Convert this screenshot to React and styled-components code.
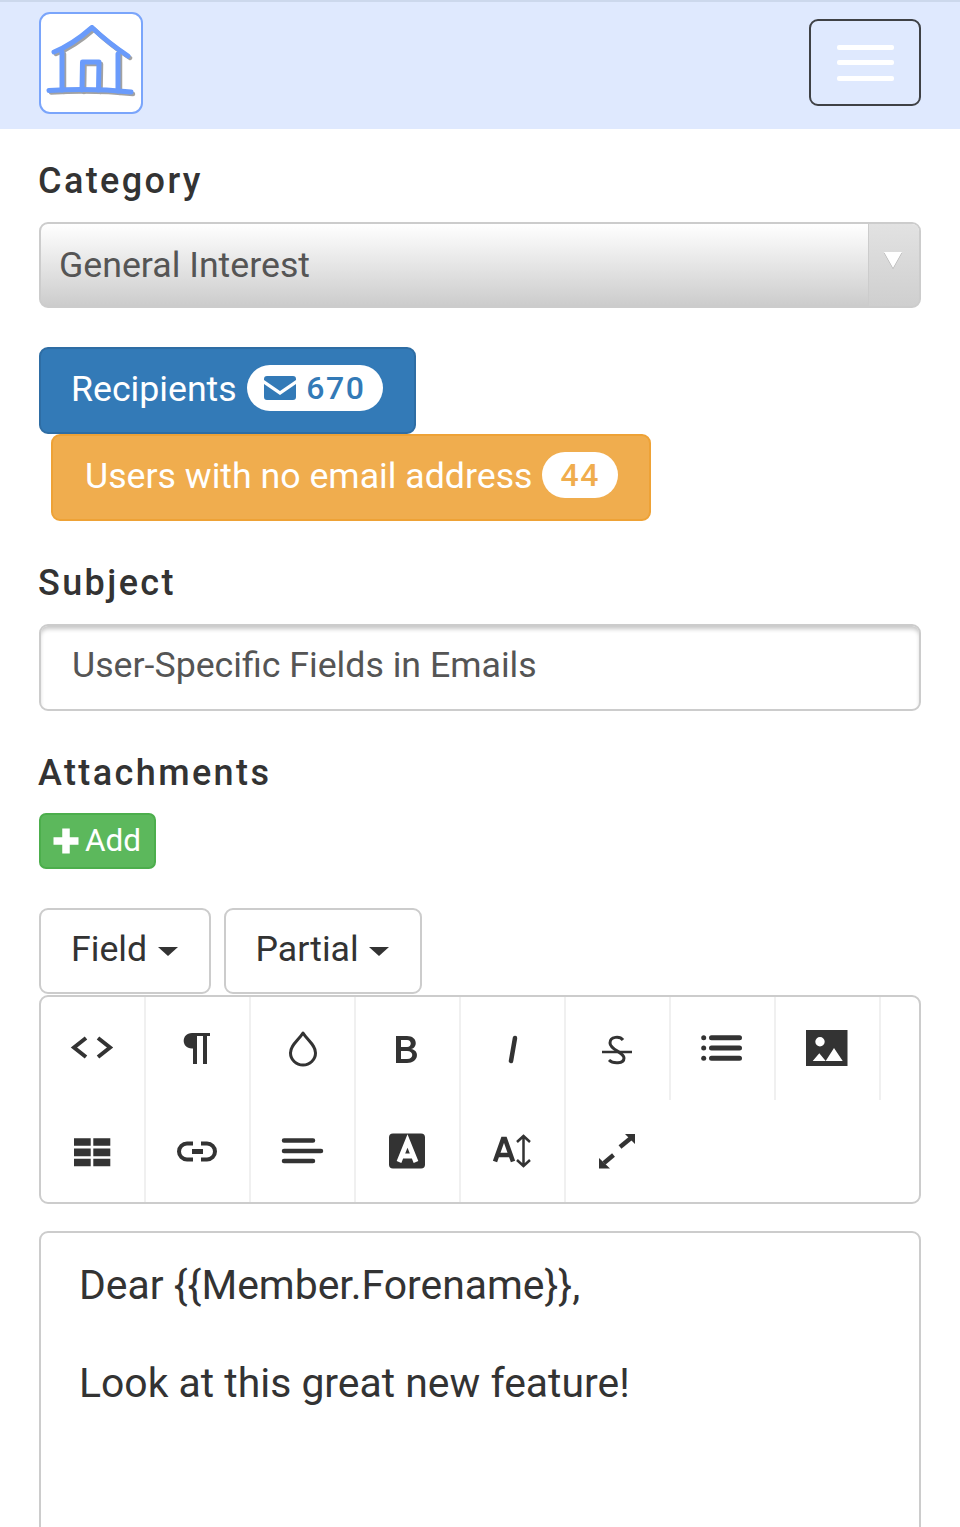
import React from "react";
import styled, { createGlobalStyle } from "styled-components";

const GlobalStyle = createGlobalStyle`
  html, body {
    margin: 0;
    padding: 0;
    height: 1527px;
    overflow: hidden;
    background: #fff;
    font-family: Roboto, "Liberation Sans", sans-serif;
    color: #555;
  }
  * { box-sizing: border-box; }
`;

const Header = styled.header`
  height: 129px;
  background: #dfe9fe;
  border-top: 2px solid #ccd8ec;
  padding: 10px 39px 0;
  display: flex;
  justify-content: space-between;
  align-items: flex-start;
`;

const LogoBox = styled.div`
  width: 104px;
  height: 102px;
  background: #fff;
  border: 2px solid #7aa5fb;
  border-radius: 11px;
  display: flex;
  align-items: center;
  justify-content: center;
`;

const LogoArt = styled.svg`
  filter: blur(0.5px);
`;

const Burger = styled.div`
  width: 112px;
  height: 87px;
  margin-top: 7px;
  border: 2px solid #3f4145;
  border-radius: 9px;
  display: flex;
  flex-direction: column;
  align-items: center;
  justify-content: center;
  gap: 10.5px;
`;

const BurgerBar = styled.span`
  width: 57px;
  height: 5px;
  border-radius: 2px;
  background: #fff;
`;

const Main = styled.main`
  padding: 0 39px;
  display: flex;
  flex-direction: column;
  align-items: flex-start;
`;

const Label = styled.label`
  font-size: 36px;
  line-height: 40px;
  font-weight: 500;
  letter-spacing: 2.4px;
  margin-left: -1px;
  color: #333;
  margin-top: ${(p) => p.$top}px;
`;

const Select = styled.div`
  width: 100%;
  height: 86px;
  margin-top: 21px;
  border: 2px solid #ccc;
  border-radius: 9px;
  background: linear-gradient(#fff, #ccc);
  display: flex;
  overflow: hidden;
`;

const SelectValue = styled.div`
  flex: 1;
  padding-left: 18px;
  font-size: 35.7px;
  line-height: 82px;
  color: #555;
`;

const SelectArrow = styled.div`
  width: 51px;
  border-left: 1px solid #ccc;
  background: linear-gradient(#e2e2e2, #cfcfcf);
  display: flex;
  justify-content: center;
  padding: 28px 3px 0 0;
  &::before {
    content: "";
    width: 0;
    height: 0;
    border-left: 9px solid transparent;
    border-right: 9px solid transparent;
    border-top: 16px solid #fff;
    filter: drop-shadow(0 1px 0 #aaa);
  }
`;

const Tone = {
  primary: { bg: "#337ab7", line: "#2e6da4" },
  warning: { bg: "#f0ad4e", line: "#eea236" },
};

const AlertButton = styled.div`
  height: 87px;
  margin-top: ${(p) => p.$top || 0}px;
  margin-left: ${(p) => p.$left || 0}px;
  padding: 0 31px 4px ${(p) => p.$pad}px;
  display: flex;
  align-items: center;
  gap: 10px;
  background: ${(p) => Tone[p.$tone].bg};
  border: 2px solid ${(p) => Tone[p.$tone].line};
  border-radius: 9px;
  font-size: 35.7px;
  color: #fff;
`;

const Badge = styled.span`
  height: 46px;
  padding: 0 ${(p) => p.$pad}px;
  margin-top: -1px;
  border-radius: 23px;
  background: #fff;
  color: ${(p) => Tone[p.$tone].bg};
  display: flex;
  align-items: center;
  gap: 10px;
  font-size: 32px;
  font-weight: 500;
  letter-spacing: 1.6px;
`;

const TextInput = styled.div`
  width: 100%;
  height: 87px;
  margin-top: 21px;
  padding-left: 31px;
  border: 2px solid #ccc;
  border-radius: 9px;
  box-shadow: inset 0 4px 4px -1px rgba(0, 0, 0, 0.22);
  font-size: 35.7px;
  line-height: 79px;
  color: #555;
`;

const AddButton = styled.div`
  width: 117px;
  height: 56px;
  margin-top: 20px;
  background: #5cb85c;
  border: 2px solid #4cae4c;
  border-radius: 7px;
  color: #fff;
  font-size: 31.5px;
  display: flex;
  align-items: center;
  padding: 0 0 1px 12px;
  gap: 6px;
`;

const DropdownRow = styled.div`
  display: flex;
  gap: 13px;
  margin-top: 39px;
`;

const DropdownButton = styled.div`
  height: 86px;
  padding: 0 31px 4px 30px;
  display: flex;
  align-items: center;
  gap: 10.4px;
  border: 2px solid #ccc;
  border-radius: 9px;
  font-size: 35.7px;
  color: #333;
  &::after {
    content: "";
    width: 0;
    height: 0;
    margin-top: 4px;
    border-left: 10px solid transparent;
    border-right: 10px solid transparent;
    border-top: 9px solid #333;
  }
`;

const Toolbar = styled.div`
  width: 100%;
  height: 209px;
  margin-top: 1px;
  border: 2px solid #ccc;
  border-radius: 9px;
  display: flex;
  flex-wrap: wrap;
  align-content: flex-start;
`;

const ToolCell = styled.div`
  width: 105px;
  height: 102.5px;
  border-right: 2px solid ${(p) => (p.$plain ? "transparent" : "#f0f0f0")};
  display: flex;
  align-items: flex-start;
  justify-content: center;
  padding: 31px 2px 0 0;
  color: #333;
`;

const Editor = styled.div`
  width: 100%;
  height: 400px;
  margin-top: 27px;
  padding: 26px 38px;
  border: 2px solid #ccc;
  border-radius: 9px;
  font-size: 40.9px;
  line-height: 52px;
  color: #333;
`;

const EditorLine = styled.p`
  margin: 0 0 46px;
`;

const HouseLogo = () => {
  const strokes = (
    <>
      <path d="M13 38 C26 33 39 24 51 13.500 C62 24 75 34 87 42" />
      <path d="M21 38 L21 76 M77 40 L77 77" />
      <path d="M41 76 L41.500 48 L58 48 L57.500 76" />
      <path d="M8 76.500 C35 75 65 75.500 90 78" />
    </>
  );
  return (
    <LogoArt width="100" height="98" viewBox="0 0 100 98" fill="none" strokeLinecap="round" strokeLinejoin="round">
      <g stroke="#8b8b8b" strokeWidth="4.5" transform="translate(2 2)" opacity="0.8">{strokes}</g>
      <g stroke="#6a9bfb" strokeWidth="5">{strokes}</g>
    </LogoArt>
  );
};

const Icon = ({ children, w = 44, h = 44 }) => (
  <svg width={w} height={h} viewBox={`0 0 ${w} ${h}`} fill="none" stroke="currentColor">
    {children}
  </svg>
);

const tools = [
  <Icon key="code">
    <path d="M16 10 L4 19.500 L16 29 M28 10 L40 19.500 L28 29" strokeWidth="4" />
  </Icon>,
  <Icon key="para">
    <path d="M17 5 H35 V8 H32 V36 H28 V8 H22 V36 H18 V20.500 H17 C6 20.500 6 5 17 5 Z" fill="currentColor" stroke="none" />
  </Icon>,
  <Icon key="drop">
    <path d="M23 5 C28 13 35.500 17 35.500 25 A12.500 12 0 0 1 10.500 25 C10.500 17 18 13 23 5 Z" strokeWidth="3" strokeLinejoin="round" />
  </Icon>,
  <Icon key="bold">
    <path d="M11 8 H22 C33 8 33 20 26 21 C35 22 34 35 22 35 H11 Z M16 12 V19 H22 C27 19 27 12 22 12 Z M16 23 V31 H22 C29 31 29 23 22 23 Z" fill="currentColor" fillRule="evenodd" stroke="none" />
  </Icon>,
  <Icon key="italic">
    <path d="M25 10 L21 33" strokeWidth="4.5" strokeLinecap="round" />
  </Icon>,
  <Icon key="strike">
    <path d="M28 12 C25 8 15 8 15 15 C15 22 29 24 29 30 C29 36 18 36 14 32" strokeWidth="3" />
    <path d="M7 24 H37" strokeWidth="2.500" />
  </Icon>,
  <Icon key="list">
    <g fill="currentColor" stroke="none">
      <circle cx="3.700" cy="9.700" r="2.500" />
      <circle cx="3.700" cy="20" r="2.500" />
      <circle cx="3.700" cy="30.300" r="2.500" />
    </g>
    <path d="M11.500 9.700 H39.500 M11.500 20 H39.500 M11.500 30.300 H39.500" strokeWidth="5" strokeLinecap="round" />
  </Icon>,
  <Icon key="picture">
    <path fillRule="evenodd" fill="currentColor" stroke="none" d="M1 2 H42.500 V38 H1 Z M15 9 A4.700 4.700 0 1 0 15 18.400 A4.700 4.700 0 1 0 15 9 Z M7.700 33 H20.700 L14.300 25.300 Z M20.700 33 H37.700 L29 20 Z" />
  </Icon>,
  <Icon key="table">
    <path fill="currentColor" stroke="none" d="M4 7.200 H20.700 V14.800 H4 Z M23.300 7.200 H40.300 V14.800 H23.300 Z M4 17.500 H20.700 V25.200 H4 Z M23.300 17.500 H40.300 V25.200 H23.300 Z M4 27.800 H20.700 V35.200 H4 Z M23.300 27.800 H40.300 V35.200 H23.300 Z" />
  </Icon>,
  <Icon key="link">
    <path d="M18 12.500 H12 A8 8 0 0 0 12 28.500 H18 M26 12.500 H32 A8 8 0 0 1 32 28.500 H26" strokeWidth="4" />
    <path d="M17 20.500 H28" strokeWidth="5" />
  </Icon>,
  <Icon key="align">
    <path d="M4 9.500 H33 M4 20 H41 M4 30 H33" strokeWidth="4.500" strokeLinecap="round" />
  </Icon>,
  <Icon key="color">
    <rect x="4" y="2.500" width="36" height="35" rx="4" fill="currentColor" stroke="none" />
    <path d="M14 31 L22.500 10 L31 31 M16.500 25 H28.500" stroke="#fff" strokeWidth="5" />
  </Icon>,
  <Icon key="height">
    <path d="M5 30.500 L13 8 H15 L23 30.500 M8 24 H20" strokeWidth="4.500" />
    <path d="M33.500 5 V35 M27 11 L33.500 5 L40 11 M27 29 L33.500 35 L40 29" strokeWidth="2.500" />
  </Icon>,
  <Icon key="expand">
    <path d="M25 16 L36 7" strokeWidth="4.500" />
    <path d="M9 32 L18.500 24" strokeWidth="4.500" />
    <path d="M30 3 H40 V13 Z M4 27 V37.500 H15 Z" fill="currentColor" stroke="none" />
  </Icon>,
];

export default function App() {
  return (
    <>
      <GlobalStyle />
      <Header>
        <LogoBox>
          <HouseLogo />
        </LogoBox>
        <Burger>
          <BurgerBar />
          <BurgerBar />
          <BurgerBar />
        </Burger>
      </Header>
      <Main>
        <Label $top={32}>Category</Label>
        <Select>
          <SelectValue>General Interest</SelectValue>
          <SelectArrow />
        </Select>
        <AlertButton $tone="primary" $top={39} $pad={30}>
          Recipients
          <Badge $tone="primary" $pad={17.5}>
            <svg width="32" height="24" viewBox="0 0 32 24">
              <path fill="currentColor" fillRule="evenodd" d="M3 0 H29 A3 3 0 0 1 32 3 V4 L16 15 L0 4 V3 A3 3 0 0 1 3 0 Z M0 8 L16 19 L32 8 V21 A3 3 0 0 1 29 24 H3 A3 3 0 0 1 0 21 Z" />
            </svg>
            670
          </Badge>
        </AlertButton>
        <AlertButton $tone="warning" $left={12} $pad={32}>
          Users with no email address
          <Badge $tone="warning" $pad={18}>44</Badge>
        </AlertButton>
        <Label $top={42}>Subject</Label>
        <TextInput>User-Specific Fields in Emails</TextInput>
        <Label $top={42}>Attachments</Label>
        <AddButton>
          <svg width="26" height="26" viewBox="0 0 26 26">
            <path stroke="#fff" strokeWidth="7.500" d="M13 0.500 V25.500 M0.500 13 H25.500" />
          </svg>
          Add
        </AddButton>
        <DropdownRow>
          <DropdownButton>Field</DropdownButton>
          <DropdownButton>Partial</DropdownButton>
        </DropdownRow>
        <Toolbar>
          {tools.map((tool, i) => (
            <ToolCell key={i} $plain={i === 13}>{tool}</ToolCell>
          ))}
        </Toolbar>
        <Editor>
          <EditorLine>Dear {"{{Member.Forename}}"},</EditorLine>
          <EditorLine>Look at this great new feature!</EditorLine>
        </Editor>
      </Main>
    </>
  );
}
